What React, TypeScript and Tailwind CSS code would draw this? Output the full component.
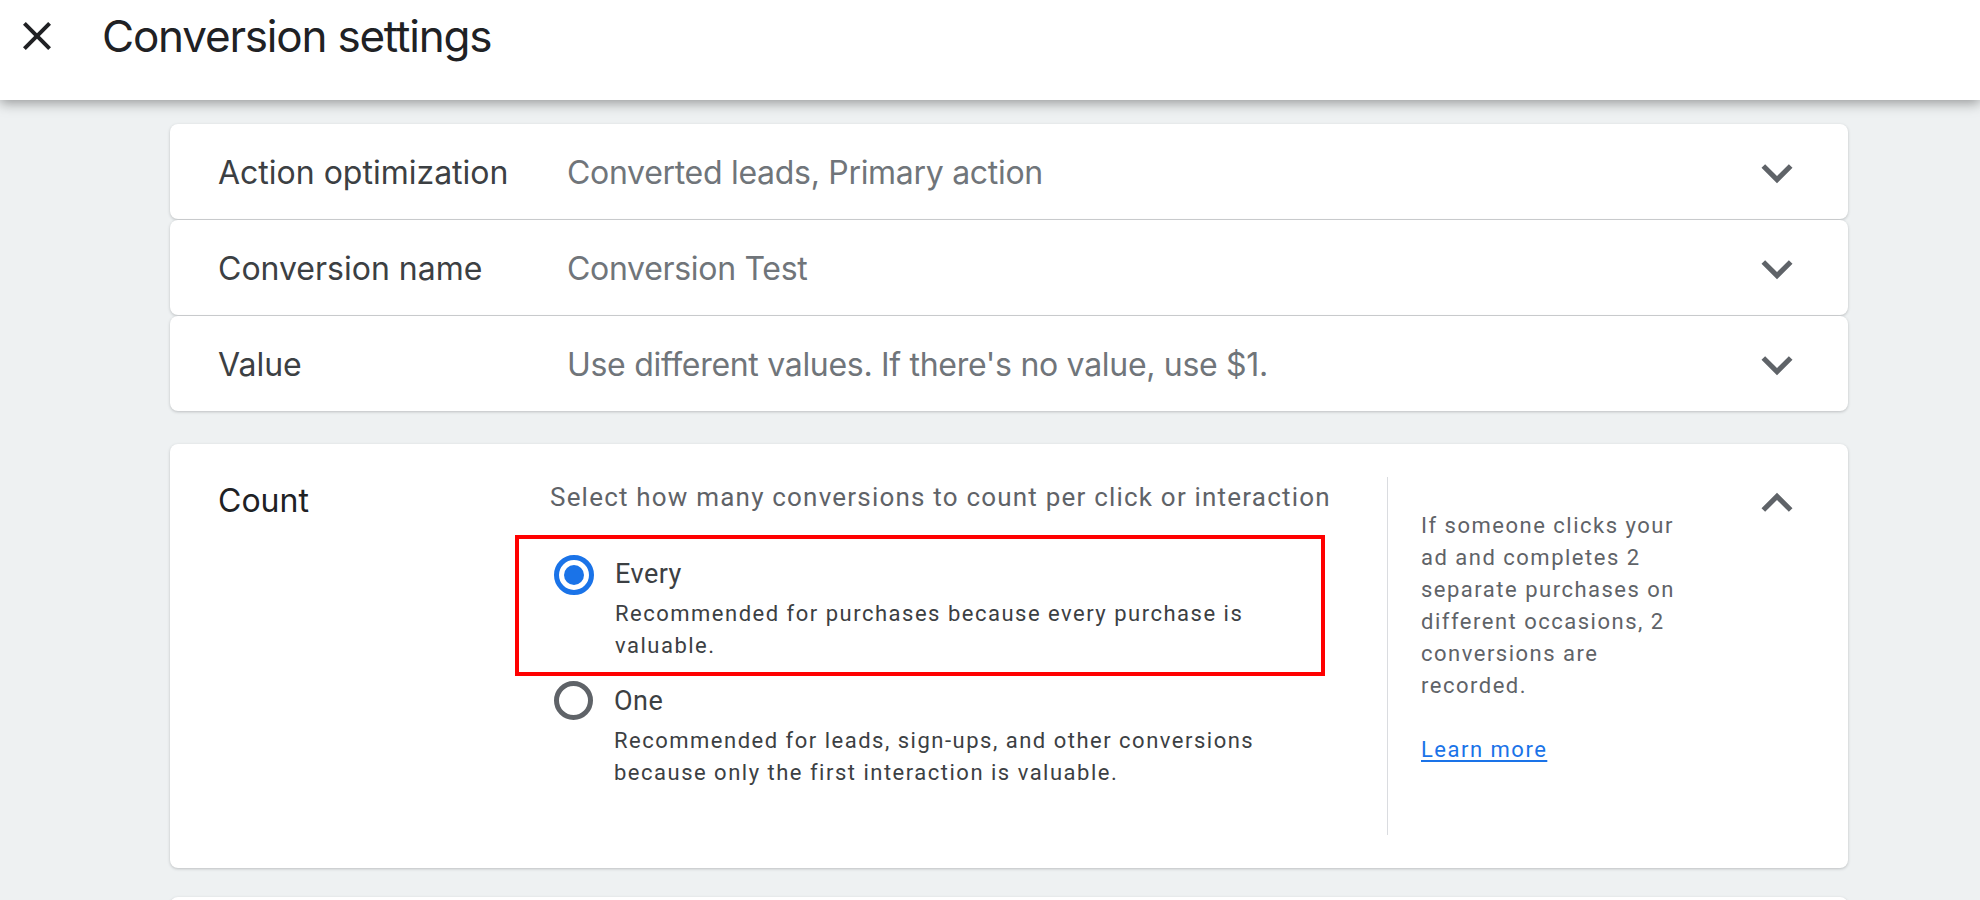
import React from "react";

const ExpandMore = () => (
  <svg width="62" height="62" viewBox="0 0 24 24" className="shrink-0">
    <path d="M16.59 8.59 12 13.17 7.41 8.59 6 10l6 6 6-6z" fill="#5f6368" />
  </svg>
);

const ExpandLess = () => (
  <svg width="62" height="62" viewBox="0 0 24 24" className="shrink-0">
    <path d="M12 8l-6 6 1.41 1.41L12 10.83l4.59 4.58L18 14z" fill="#5f6368" />
  </svg>
);

const CloseIcon = () => (
  <svg width="48" height="48" viewBox="0 0 24 24" className="shrink-0">
    <path
      d="M19 6.41 17.59 5 12 10.59 6.41 5 5 6.41 10.59 12 5 17.59 6.41 19 12 13.41 17.59 19 19 17.59 13.41 12z"
      fill="#202124"
    />
  </svg>
);

function SummaryCard({ label, value }: { label: string; value: string }) {
  return (
    <div className="flex h-[95px] items-center rounded-lg bg-white pl-[48px] pr-[40px] pt-[2px] shadow-[0_1px_3px_rgba(60,64,67,0.28)]">
      <div className="w-[349px] shrink-0 font-['Inter',sans-serif] text-[32px] leading-[40px] tracking-[0px] text-[#3c4043]">
        {label}
      </div>
      <div className="flex-1 font-['Inter',sans-serif] text-[32px] leading-[40px] tracking-[-0.3px] text-[#70757a]">
        {value}
      </div>
      <ExpandMore />
    </div>
  );
}

function Radio({ checked }: { checked: boolean }) {
  return checked ? (
    <div className="flex h-[40px] w-[40px] shrink-0 items-center justify-center rounded-full border-[5px] border-[#1a73e8]">
      <div className="h-[20px] w-[20px] rounded-full bg-[#1a73e8]" />
    </div>
  ) : (
    <div className="h-[39px] w-[39px] shrink-0 rounded-full border-[5px] border-[#5f6368]" />
  );
}

export default function App() {
  return (
    <div className="relative h-[900px] w-full overflow-hidden bg-[#eef1f2] font-['Roboto',sans-serif]">
      <header className="relative z-10 flex h-[100px] items-center bg-white pb-[28px] pl-[13px] shadow-[0_3px_12px_rgba(0,0,0,0.38)]">
        <CloseIcon />
        <h1 className="ml-[41px] font-['Inter',sans-serif] text-[44px] font-normal leading-[52px] tracking-[-1.2px] text-[#202124]">
          Conversion settings
        </h1>
      </header>

      <main className="pl-[170px] pr-[132px] pt-[24px]">
        <div className="flex flex-col gap-[1px]">
          <SummaryCard label="Action optimization" value="Converted leads, Primary action" />
          <SummaryCard label="Conversion name" value="Conversion Test" />
          <SummaryCard label="Value" value="Use different values. If there's no value, use $1." />
        </div>

        <section className="mt-[33px] flex h-[424px] rounded-lg bg-white py-[33px] pl-[48px] pr-[40px] shadow-[0_1px_3px_rgba(60,64,67,0.28)]">
          <div className="w-[332px] shrink-0 pt-[4px] font-['Inter',sans-serif] text-[32px] leading-[40px] tracking-[0px] text-[#202124]">
            Count
          </div>

          <div className="w-[805px] shrink-0 pt-[4px]">
            <p className="text-[26px] leading-[32px] tracking-[1.2px] text-[#5f6368]">
              Select how many conversions to count per click or interaction
            </p>

            <div className="relative mt-[41px] flex gap-[21px] pl-[4px]">
              <div className="pointer-events-none absolute left-[-35px] top-[-19px] h-[141px] w-[810px] border-[4px] border-[#ff0000]" />
              <div className="pt-[1px]">
                <Radio checked />
              </div>
              <div className="pt-[2px]">
                <div className="text-[27px] leading-[36px] tracking-[0.5px] text-[#3c4043]">Every</div>
                <div className="mt-[6px] text-[22px] leading-[32px] tracking-[1.5px] text-[#3c4043]">
                  Recommended for purchases because every purchase is
                  <br />
                  valuable.
                </div>
              </div>
            </div>

            <div className="mt-[20px] flex gap-[21px] pl-[4px]">
              <div className="-mt-[1px]">
                <Radio checked={false} />
              </div>
              <div className="pt-[1px]">
                <div className="text-[27px] leading-[36px] tracking-[0.5px] text-[#3c4043]">One</div>
                <div className="mt-[6px] text-[22px] leading-[32px] tracking-[1.5px] text-[#3c4043]">
                  Recommended for leads, sign-ups, and other conversions
                  <br />
                  because only the first interaction is valuable.
                </div>
              </div>
            </div>
          </div>

          <div className="ml-[32px] w-px shrink-0 self-stretch bg-[#dadce0]" />

          <div className="ml-[33px] w-[270px] shrink-0 pt-[33px] text-[22px] leading-[32px] tracking-[1.5px] text-[#5f6368]">
            <p>
              If someone clicks your ad and completes 2 separate purchases on different occasions, 2 conversions are
              recorded.
            </p>
            <a href="#" className="mt-[32px] block text-[#1a73e8] underline underline-offset-[3px]">
              Learn more
            </a>
          </div>

          <div className="flex flex-1 justify-end">
            <div className="-mt-[5px]">
              <ExpandLess />
            </div>
          </div>
        </section>

        <div className="mt-[29px] h-[120px] rounded-lg bg-white shadow-[0_1px_3px_rgba(60,64,67,0.28)]" />
      </main>
    </div>
  );
}
